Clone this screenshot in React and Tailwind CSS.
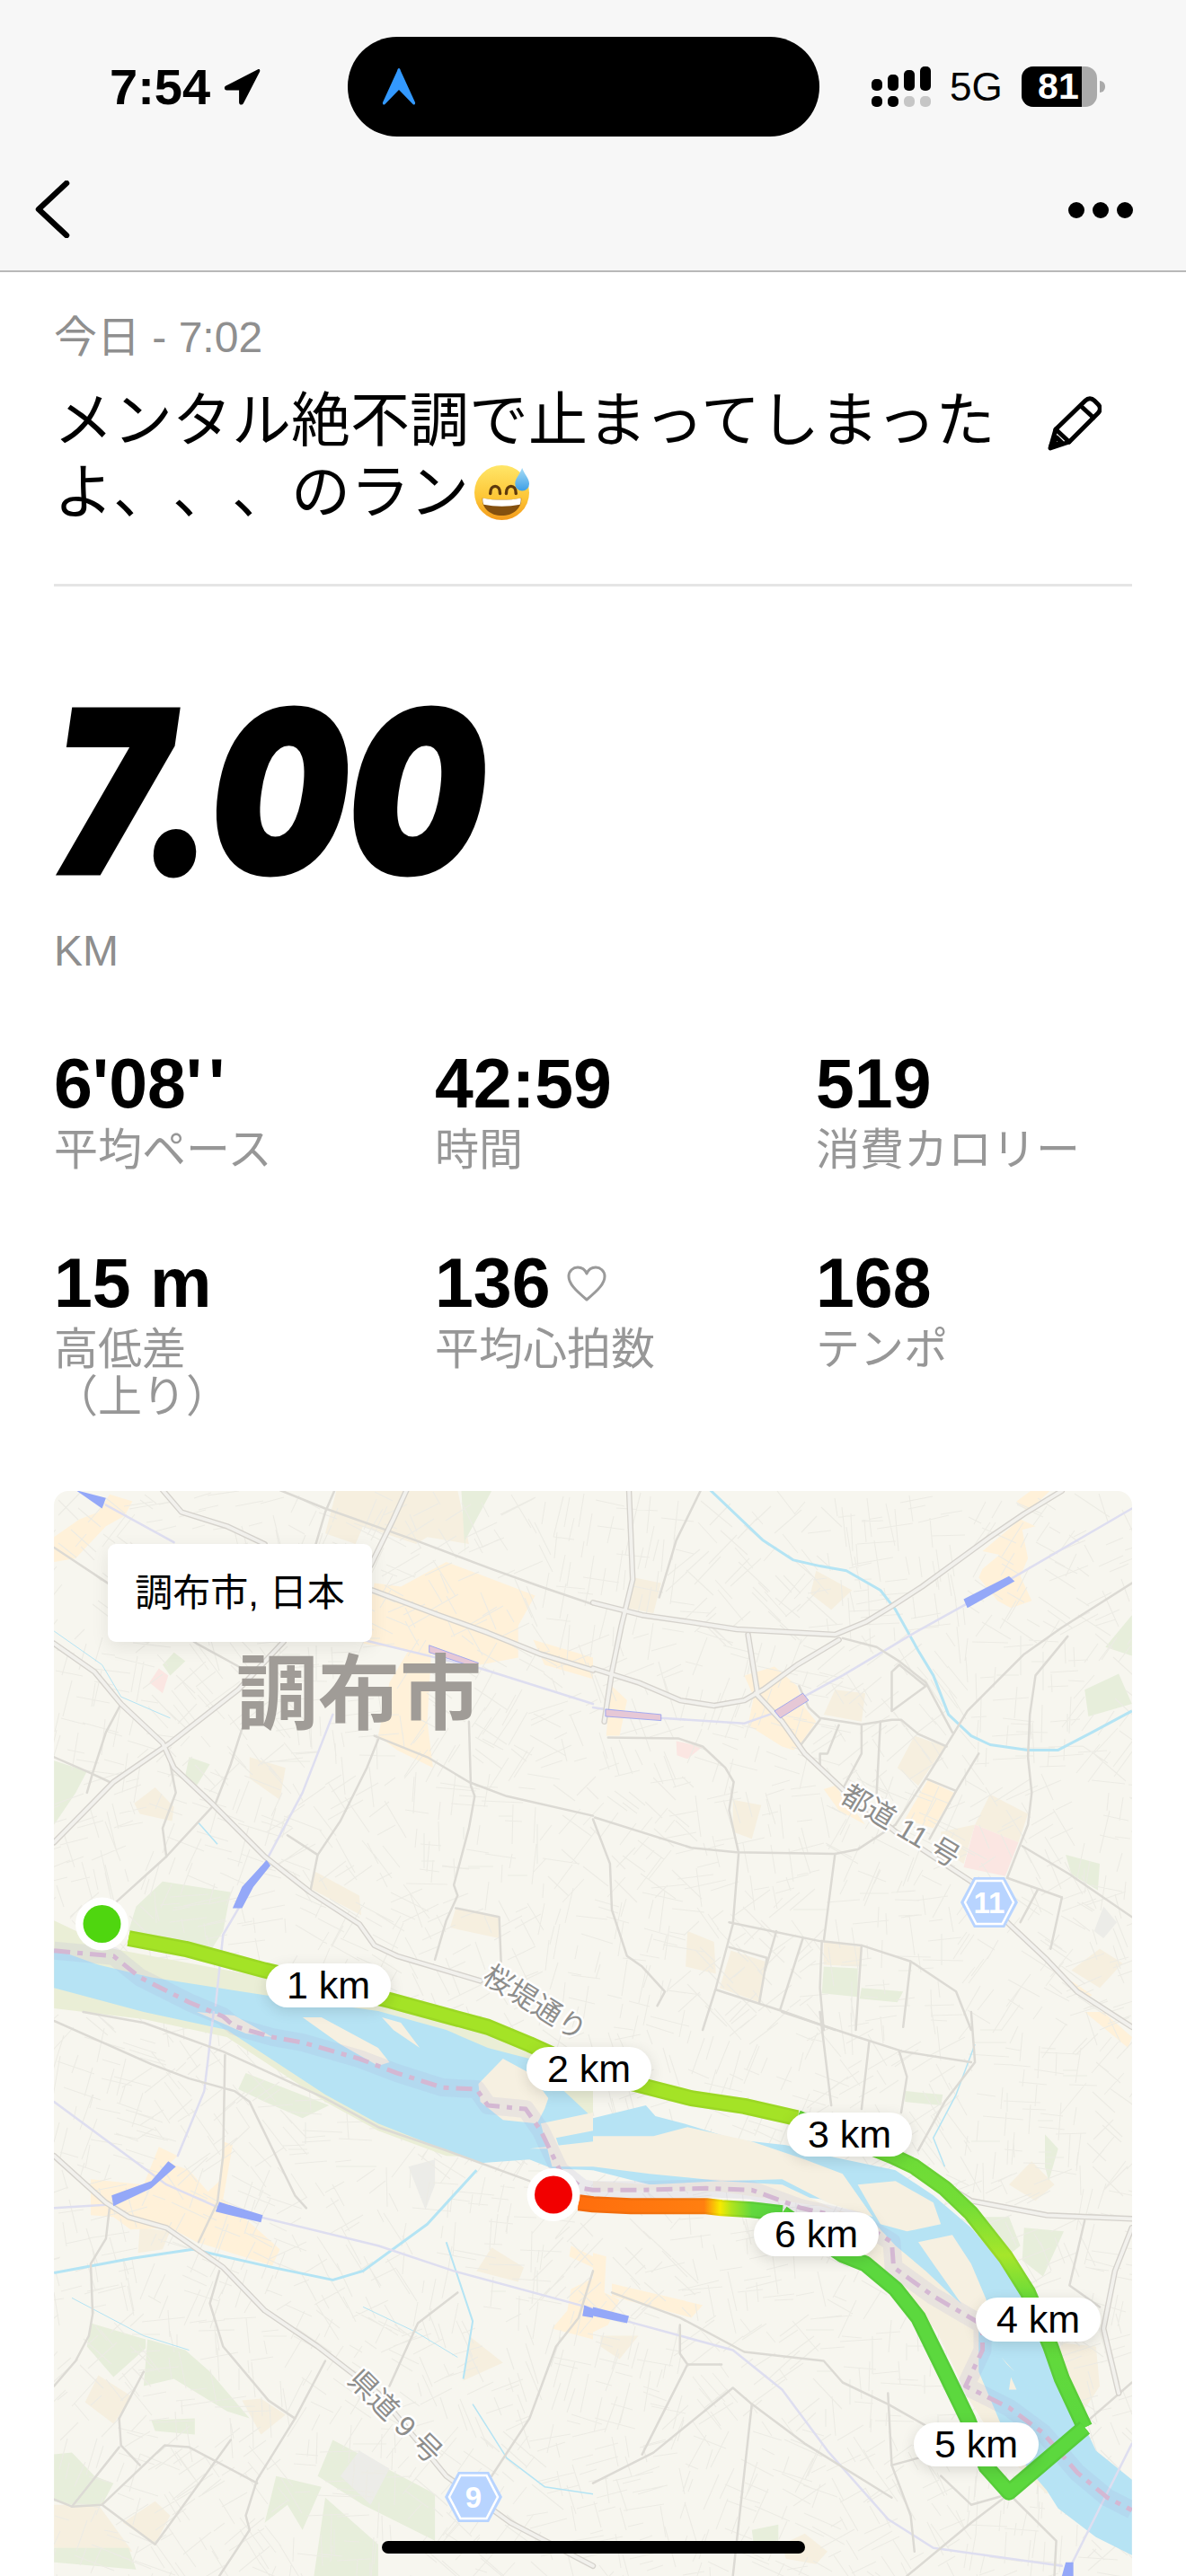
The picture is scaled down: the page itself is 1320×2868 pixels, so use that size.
import React from "react";

// zoom crops of the map, traced in their own coordinates
const Q = {
  a: [0, 1640, 660, 620],
  b: [660, 1640, 660, 620],
  c: [0, 2240, 660, 628],
  d: [660, 2240, 660, 628],
};
const P = (q, s) => {
  const [ox, oy, w, h] = Q[q];
  return s
    .trim()
    .split(/\s+/)
    .map((p) => {
      const [x, y] = p.split(",").map(Number);
      return `${(ox + (x * w) / 1568).toFixed(1)},${(oy + (y * h) / 1568).toFixed(1)}`;
    })
    .join(" ");
};

const tan = [
  ["a", "890,48 1210,48 1240,200 1130,180 1100,200 960,150 940,200 860,170"],
  ["a", "660,800 755,830 740,920 660,860"],
  ["a", "355,930 410,885 460,940 455,980 370,960"],
  ["a", "830,1120 950,1190 955,1245 820,1170"],
  ["a", "1205,1225 1320,1250 1320,1310 1190,1280"],
  ["b", "110,295 180,310 160,395 90,380"],
  ["b", "590,275 685,330 630,385 575,340"],
  ["b", "640,610 720,620 710,700 610,680"],
  ["b", "850,740 930,770 860,880 805,830"],
  ["b", "370,920 445,935 420,1030 370,1010"],
  ["b", "1050,905 1150,960 1125,1040 1010,990"],
  ["b", "920,1010 1010,990 980,1100 920,1060"],
  ["b", "250,1290 320,1320 325,1410 245,1390"],
  ["b", "365,1345 455,1375 440,1490 335,1450"],
  ["b", "610,1320 710,1335 705,1390 610,1385"],
  ["b", "1340,1340 1400,1380 1340,1450 1265,1400"],
  ["c", "640,1080 690,1075 755,1120 690,1175"],
  ["c", "260,1010 350,1070 300,1145 225,1085"],
  ["c", "1260,720 1300,655 1385,710 1370,750"],
  ["c", "1240,900 1330,975 1225,1025"],
  ["c", "143,1370 260,1370 350,1500 143,1490"],
  ["c", "410,1360 450,1400 410,1480 325,1420"],
  ["c", "370,600 450,610 430,660 365,670"],
  ["d", "20,900 120,900 70,965 20,930"],
  ["d", "1100,480 1160,415 1220,480 1170,525"],
  ["d", "1240,920 1330,930 1340,1040 1290,1120 1220,1000"],
  ["d", "500,1480 560,1450 620,1500 590,1535 510,1520"],
];

const yellow = [
  ["a", "143,180 210,130 260,110 290,60 350,80 330,120 280,150 200,240 143,250"],
  ["a", "960,480 990,310 1060,320 1180,250 1280,290 1415,345 1370,430 1370,520 1270,540 1140,510 1130,700 1145,830 1050,780 1000,740 1030,590 1080,500"],
  ["a", "1410,470 1568,520 1568,580 1440,540"],
  ["b", "400,570 480,545 540,600 560,660 590,700 550,760 530,780 500,770 410,710 425,630"],
  ["b", "1030,270 1075,230 1030,220 1130,130 1170,150 1135,160 1150,240 1130,290 1160,360 1105,380 1070,360 1020,295"],
  ["b", "1120,80 1160,48 1210,48 1150,110"],
  ["b", "825,975 885,865 955,900 900,1000"],
  ["b", "610,890 640,880 720,990 650,950"],
  ["b", "40,590 90,640 70,740 35,740 40,680"],
  ["b", "1265,1430 1320,1470 1300,1480"],
  ["c", "240,465 380,480 420,375 470,400 450,420 500,440 550,500 580,470 590,360 615,370 590,520 740,660 720,705 520,640 450,600 345,605 300,570 240,565"],
  ["c", "1510,650 1568,680 1568,710 1505,680"],
  ["c", "1510,770 1568,740 1568,910 1460,880 1500,830"],
  ["d", "50,755 290,815 260,850 50,790"],
  ["d", "0,670 35,680 30,780 70,800 40,870 0,890"],
  ["d", "1300,0 1350,0 1425,70 1415,100"],
];

const green = [
  ["a", "360,1220 430,1150 610,1180 590,1290 560,1340 480,1320 340,1290"],
  ["a", "143,810 230,840 200,900 143,990"],
  ["a", "430,540 460,505 490,530 450,570"],
  ["a", "500,800 555,820 520,880 490,850"],
  ["a", "1230,190 1300,50 1220,50 1230,230"],
  ["b", "1300,610 1390,565 1425,650 1310,685"],
  ["b", "1355,490 1425,400 1425,515"],
  ["b", "610,1390 700,1395 700,1475 605,1465"],
  ["b", "710,1450 820,1460 805,1490 705,1480"],
  ["b", "1250,1075 1340,1100 1335,1175 1265,1130"],
  ["c", "650,170 870,260 800,295 700,250 630,215"],
  ["c", "240,865 385,910 385,935 300,1015 230,930"],
  ["c", "390,910 490,940 555,1000 660,1130 600,1110 460,1020 380,1040"],
  ["c", "400,1135 515,1130 515,1175 410,1165"],
  ["c", "143,1230 190,1225 250,1290 190,1370 143,1360"],
  ["c", "250,1290 300,1310 270,1370 190,1370"],
  ["c", "700,1420 730,1290 850,1320 800,1440 760,1370"],
  ["c", "860,1350 1000,1480 1000,1568 830,1568"],
  ["c", "840,1290 880,1190 1150,1340 1150,1470 960,1370"],
  ["c", "143,1490 340,1490 360,1550 143,1530"],
  ["d", "825,220 925,230 920,260 825,250"],
  ["d", "1140,600 1245,610 1190,735 1135,690"],
  ["d", "1030,570 1100,570 1130,650 1095,680"],
  ["d", "1195,340 1230,380 1205,470 1195,430"],
  ["d", "420,1440 490,1425 490,1480 425,1480"],
];

const medium = [
  ["a", "740,48 860,100 1100,190 1300,270 1430,320 1568,370"],
  ["a", "885,48 860,110 835,200"],
  ["a", "143,210 285,310 520,480 640,550"],
  ["a", "143,800 240,845 300,875"],
  ["a", "320,650 280,730 245,845 230,900"],
  ["a", "1240,700 1245,880 1255,910 1240,1000 1200,1160 1210,1190 1180,1260 1150,1370"],
  ["a", "1000,750 970,830 900,980 840,1075 820,1180"],
  ["a", "760,1020 840,1075"],
  ["a", "990,740 1130,800 1240,870 1340,910 1568,965"],
  ["a", "640,720 610,820 570,930 440,1080 305,1210"],
  ["a", "440,1080 430,1000 465,900 450,820"],
  ["a", "1205,1225 1320,1250 1325,1380"],
  ["b", "285,48 220,190 175,350"],
  ["b", "5,970 260,1055 380,1068 640,1072 700,1060 800,990"],
  ["b", "40,745 225,747 290,770 350,830 372,870 360,950 385,1070 370,1270 325,1450 290,1568"],
  ["b", "0,975 45,1100 50,1230 90,1360 130,1390 190,1460 170,1500"],
  ["b", "360,1265 600,1318 710,1330 840,1375 960,1460 1000,1568"],
  ["b", "605,1318 600,1450 610,1568"],
  ["b", "640,1072 610,1318"],
  ["b", "1425,310 1240,435 1140,510 990,670 950,740 880,860 800,990"],
  ["b", "1255,460 1170,570 1155,680 1150,800 1160,900 1150,990 1095,1140"],
  ["b", "1020,790 960,895 890,1030"],
  ["b", "880,860 960,895"],
  ["b", "545,600 570,660 600,690 710,708 790,695 815,695 860,735 935,770"],
  ["b", "790,560 790,670 880,600 810,540 790,560"],
  ["b", "660,465 750,490 810,530 880,590 950,730"],
  ["b", "1135,1050 1260,1130 1425,1250"],
  ["b", "1095,1140 1240,1195"],
  ["b", "1175,1175 1130,1265"],
  ["b", "760,700 750,900"],
  ["b", "650,710 620,790 600,790 600,820"],
  ["b", "710,710 710,790 665,880"],
  ["b", "600,695 550,765"],
  ["b", "360,1335 460,1365 440,1490"],
  ["b", "485,1290 455,1400"],
  ["b", "555,1310 495,1510"],
  ["b", "325,1455 500,1515 640,1568"],
  ["b", "840,1375 820,1560"],
  ["b", "710,1330 695,1568"],
  ["b", "1240,1195 1210,1340"],
  ["c", "143,25 400,145 500,185 620,220 660,250 720,380 780,510 810,545"],
  ["c", "220,0 380,30 590,110 860,240 1000,320 1180,385 1400,470"],
  ["c", "595,120 590,400 575,530 525,640"],
  ["c", "290,540 280,630 240,700 245,840 235,900 200,970 143,1040"],
  ["c", "580,720 555,810 590,930 710,1080 780,1130 680,1300 650,1400 660,1440 580,1568"],
  ["c", "860,970 780,1130"],
  ["c", "1210,780 1105,865 1030,1040"],
  ["c", "1568,720 1530,850 1470,930 1400,1130 1300,1290"],
  ["c", "143,1355 190,1375 270,1370 435,1205 500,1210 680,1310"],
  ["c", "610,1190 410,1480 270,1370"],
  ["c", "315,1210 190,1375"],
  ["c", "315,1130 320,1205 370,1260"],
  ["c", "380,1000 315,1130"],
  ["d", "500,0 700,70 820,110 1000,140"],
  ["d", "600,0 630,260"],
  ["d", "730,85 710,270"],
  ["d", "810,110 830,180 815,280"],
  ["d", "1000,0 1010,140 930,250 860,385"],
  ["d", "1425,1030 1310,1135"],
  ["d", "1100,1340 1000,1420 830,1568"],
  ["d", "1100,1340 1225,1470 1220,1568"],
  ["d", "0,1310 160,1225 370,1045 420,1090 560,1200 790,1350"],
  ["d", "340,980 250,980 130,1230"],
  ["d", "230,870 230,950 250,980"],
  ["d", "50,780 230,850 400,945 610,970 660,1030 780,1090 880,1150"],
  ["d", "780,1060 790,1260 860,1240"],
  ["d", "790,1260 840,1400 850,1500"],
  ["d", "920,1290 1000,1370 1100,1340"],
  ["d", "1300,580 1260,760 1340,820"],
  ["d", "420,1090 370,1568"],
];

const thick = [
  ["a", "430,48 480,110 600,150 700,200"],
  ["a", "1075,48 1040,130 980,260"],
  ["a", "985,330 1160,400 1290,450 1430,510 1568,555"],
  ["a", "143,480 250,560 320,650 430,760 460,830 560,930 700,1080 820,1180 950,1270 990,1330 1050,1360 1270,1430"],
  ["a", "143,1040 300,870 450,760 630,610 750,475"],
  ["b", "0,365 130,400 260,420 380,440 640,455 720,420 790,375 870,320 960,250 1050,180 1140,115 1240,50"],
  ["b", "0,550 120,590 230,640 320,655 400,640 450,610 540,540 650,470"],
  ["b", "430,620 500,700 560,790 660,890 800,1010 1000,1150 1100,1270 1200,1370 1280,1460 1425,1560"],
  ["b", "95,48 105,300 75,430 50,560 30,700"],
  ["b", "410,455 435,620"],
  ["c", "143,400 280,530 340,570 440,600 590,710 700,830 840,930 1000,1060 1180,1290 1350,1420 1568,1540"],
  ["d", "930,480 1000,525 1200,565 1425,575"],
  ["d", "1425,600 1380,720 1350,880 1390,1060"],
];

const rails = [
  ["a", "280,90 460,195"],
  ["a", "960,470 1270,550 1568,650"],
  ["a", "880,680 800,900 700,1100 590,1300 570,1500"],
  ["b", "0,660 180,690 400,705 480,675 660,570 850,450 985,370 1110,295 1425,100"],
  ["c", "143,250 440,480 570,540 1000,650 1200,720 1568,825"],
  ["c", "143,545 300,535"],
  ["c", "565,0 540,220 470,400"],
  ["d", "90,860 370,940 500,1050 620,1220 780,1410 900,1490 1240,1540"],
  ["d", "1425,1200 1250,1568"],
];

const stations = [
  ["a", "200,48 280,70 270,100"],
  ["a", "705,1090 640,1165 615,1225 640,1225 670,1165 715,1105"],
  ["b", "980,355 1100,290 1115,305 990,380"],
  ["c", "295,510 400,470 445,415 465,430 400,490 300,540"],
  ["c", "580,528 695,565 690,585 570,555"],
  ["c", "1545,815 1568,825 1568,850 1540,845"],
  ["d", "0,820 95,845 90,865 0,845"],
  ["d", "1250,1530 1270,1530 1270,1568 1240,1568"],
];

const pinkStations = [
  ["a", "1135,485 1265,535 1250,545 1135,505"],
  ["b", "33,665 180,680 180,697 33,685"],
  ["b", "480,670 555,620 570,640 495,690"],
];

const canals = [
  ["a", "143,445 270,540 320,630 450,690", 1],
  ["a", "525,985 575,1045", 1.5],
  ["b", "310,48 450,190 530,245 600,262 670,275 760,330 800,385 860,500 900,570 940,680 1000,740 1050,765 1150,780 1230,780 1320,730 1425,670", 3],
  ["c", "143,725 350,685 510,660 720,710 880,745 960,720 1130,590 1260,440", 3],
  ["c", "960,820 1100,890 1210,960", 1],
  ["c", "1250,1090 1340,1240 1440,1320 1568,1340", 1.5],
  ["c", "190,795 380,900 500,940", 1],
  ["c", "1180,640 1250,860 1225,1020", 2],
  ["d", "1010,90 960,230 900,350 930,430", 1.5],
];

const river =
  P("a", "143,1340 260,1385 400,1420 700,1470 1000,1515") +
  " " +
  P("c", "1180,50 1290,100 1400,130") +
  " " +
  P("d", "0,295 140,260 165,290 240,310 380,355 510,370 620,400 800,440 900,510 1000,600 1090,710 1170,830 1235,1000 1290,1130 1330,1220 1425,1300 1425,1510 1330,1460 1230,1380 1200,1330 1150,1270 1080,1150 1020,1000 1020,850 950,790 880,720 800,650 720,560 600,520 350,490 150,480 0,440") +
  " " +
  P("c", "1460,435 1400,410 1270,420 1180,385 1000,310 860,230 600,50 380,0") +
  " " +
  P("a", "143,1450");

const bankNorth =
  P("a", "143,1260 300,1340 700,1420 1000,1490 1300,1560") +
  " " +
  P("c", "1400,80 1568,150") +
  " " +
  P("d", "0,295 0,440") +
  " " +
  P("c", "1400,410 1180,400 1000,330 860,250 600,70 380,20 143,-10");

const sand = [
  ["c", "800,15 850,15 1000,100 1030,140 1000,150 900,90"],
  ["c", "1010,15 1060,30 1110,100 1040,50"],
  ["c", "520,0 620,10 720,70 650,60"],
  ["c", "1265,200 1330,130 1400,170 1450,240 1440,270 1420,310 1330,300 1270,250"],
  ["c", "1430,310 1568,280 1568,330 1470,350 1480,380 1400,380 1568,360 1568,430 1460,430"],
  ["d", "0,345 160,345 250,320 420,360 560,410 660,450 700,510 740,570 620,530 500,465 340,470 150,450 0,430"],
  ["d", "700,480 800,470 900,530 920,590 830,610 760,590"],
  ["d", "860,640 950,620 1000,700 1040,800 1040,900 1000,850 960,790 900,700"],
  ["d", "0,470 150,480 340,470 500,480 660,560 720,570 600,540 340,500 150,495 0,500"],
  ["d", "1080,960 1115,1000 1095,980"],
  ["d", "1105,1015 1120,1050 1100,1050"],
];

const bankSouth = "720,570 880,690 1010,800 1040,1000 1100,1160 1230,1300 1200,1340 1080,1220 990,1070 960,1000 910,890 820,770 720,680";

const border =
  P("a", "143,1345 300,1360 370,1420 500,1490 590,1530") +
  " " +
  P("c", "620,40 720,70 800,85 950,130 1050,170 1170,210 1260,215 1290,260 1390,270 1430,330 1480,440 1540,490") +
  " " +
  P("d", "0,495 130,495 300,490 420,495 550,545 700,580 790,640 795,710 900,790 1030,870 1030,940 985,1040 1100,1100 1190,1170 1280,1280 1360,1350 1425,1385");

// thin street texture, the real network is far too dense to trace by hand
const streets = (() => {
  let seed = 48271;
  const r = () => (seed = (seed * 16807) % 2147483647) / 2147483647;
  let d = "";
  for (let y = 1660; y < 2868; y += 26) {
    for (let x = 60; x < 1260; x += 26) {
      const base = ((Math.floor(x / 150) * 37 + Math.floor(y / 150) * 61) % 90) * (Math.PI / 180);
      const n = 1 + Math.floor(r() * 2);
      for (let i = 0; i < n; i++) {
        const a = base + (r() > 0.5 ? Math.PI / 2 : 0) + (r() - 0.5) * 0.2;
        const l = 14 + r() * 34;
        const sx = x + r() * 26;
        const sy = y + r() * 26;
        d += `M${sx.toFixed(0)} ${sy.toFixed(0)}L${(sx + Math.cos(a) * l).toFixed(0)} ${(sy + Math.sin(a) * l).toFixed(0)}`;
      }
    }
  }
  return d;
})();

const Polys = ({ items, fill, ...rest }) => (
  <g fill={fill} {...rest}>
    {items.map(([q, s], i) => (
      <polygon key={i} points={P(q, s)} />
    ))}
  </g>
);

const Lines = ({ items, stroke, width, ...rest }) => (
  <g fill="none" stroke={stroke} strokeWidth={width} strokeLinejoin="round" strokeLinecap="round" {...rest}>
    {items.map(([q, s], i) => (
      <polyline key={i} points={P(q, s)} />
    ))}
  </g>
);

const Hex = ({ cx, cy, label }) => (
  <g transform={`translate(${cx} ${cy})`}>
    <polygon points="-32,0 -17,-28 17,-28 32,0 17,28 -17,28" fill="#b8d4ff" />
    <polygon points="-27,0 -14.5,-24 14.5,-24 27,0 14.5,24 -14.5,24" fill="none" stroke="#fff" strokeWidth="2.5" />
    <text y="12" textAnchor="middle" fontSize="33" fontWeight="700" fill="#fff" fontFamily="'Liberation Sans', sans-serif">
      {label}
    </text>
  </g>
);

const RoadLabel = ({ x, y, angle, size = 32, children }) => (
  <text
    transform={`translate(${x} ${y}) rotate(${angle})`}
    textAnchor="middle"
    dominantBaseline="middle"
    fontSize={size}
    fill="#8e8e8c"
    stroke="#fff"
    strokeWidth="5"
    paintOrder="stroke"
    strokeLinejoin="round"
    fontFamily="'Liberation Sans', 'Noto Sans CJK JP', sans-serif"
  >
    {children}
  </text>
);

const RouteLine = ({ points, stroke }) => (
  <g fill="none" strokeLinejoin="round">
    <polyline points={points} stroke={stroke} strokeWidth="18" />
    <polyline points={points} stroke="#000" strokeOpacity="0.05" strokeWidth="18" />
    <polyline points={points} stroke={stroke} strokeWidth="13" />
  </g>
);

const MapDrawing = () => (
  <svg viewBox="60 1660 1200 1208" className="block h-[1208px] w-[1200px]">
    <defs>
      <linearGradient id="backLeg" gradientUnits="userSpaceOnUse" x1="0" y1="2350" x2="0" y2="2700">
        <stop offset="0" stopColor="#66da38" />
        <stop offset="0.3" stopColor="#74dd36" />
        <stop offset="0.46" stopColor="#a6e62a" />
        <stop offset="0.6" stopColor="#66da3a" />
        <stop offset="1" stopColor="#5cd83e" />
      </linearGradient>
      <linearGradient id="lastLeg" gradientUnits="userSpaceOnUse" x1="870" y1="0" x2="616" y2="0">
        <stop offset="0" stopColor="#58d63e" />
        <stop offset="0.13" stopColor="#62d83e" />
        <stop offset="0.22" stopColor="#b0e41e" />
        <stop offset="0.27" stopColor="#f8ea00" />
        <stop offset="0.34" stopColor="#ff7f10" />
        <stop offset="1" stopColor="#ff6a0c" />
      </linearGradient>
    </defs>

    <rect x="60" y="1660" width="1200" height="1208" fill="#f7f6ef" />
    <Polys items={tan} fill="#f6efdf" />
    <Polys items={yellow} fill="#fff1d9" />
    <Polys items={green} fill="#e7eedb" />
    <polygon points={P("a", "395,590 420,550 445,570 430,620")} fill="#fbe6e2" />
    <polygon points={P("b", "220,755 290,770 250,805 222,795")} fill="#fbe6e2" />
    <polygon points={P("b", "1010,990 1125,1040 1090,1135 980,1110")} fill="#fbe6e2" />
    <polygon points={P("b", "1350,1220 1385,1265 1350,1310 1325,1290")} fill="#ecece8" />
    <polygon points={P("c", "900,1290 950,1220 1030,1270 980,1370")} fill="#ecece8" />
    <polygon points={P("c", "1080,430 1150,410 1150,480 1125,550")} fill="#ecece8" />

    <path d={streets} stroke="#ecebe4" strokeWidth="1.1" fill="none" />

    {canals.map(([q, s, w], i) => (
      <polyline key={i} points={P(q, s)} fill="none" stroke="#b4e4f4" strokeWidth={w} strokeLinejoin="round" />
    ))}

    <polygon points={bankNorth} fill="#eaeed6" />
    <polygon points={P("d", bankSouth)} fill="#f5efdf" />
    <polygon points={river} fill="#b6e3f4" />
    <Polys items={sand} fill="#f6f0e1" />

    <Lines items={rails} stroke="#dedef0" width="2.5" />
    <Lines items={medium} stroke="#dcdad4" width="2.5" />
    <Lines items={thick} stroke="#d5d2cc" width="6.5" />
    <Lines items={thick} stroke="#f2f1ed" width="3.8" />
    <Polys items={stations} fill="#94a8f8" />
    <Polys items={pinkStations} fill="#e6c8d6" stroke="#8f9cf2" strokeWidth="0.8" />

    <polyline points={border} fill="none" stroke="#a9a6d8" strokeOpacity="0.16" strokeWidth="20" strokeLinejoin="round" />
    <polyline points={border} fill="none" stroke="#d4b8d3" strokeWidth="5" strokeDasharray="18 8 6 8" strokeLinejoin="round" />

    <RouteLine
      points={P("a", "340,1310 490,1340 700,1400 1032,1485 1290,1560") + " " + P("c", "1400,90 1568,170") + " " + P("d", "130,205 260,240 400,262 540,295")}
      stroke="#a4e326"
    />
    <RouteLine points={P("d", "540,295 790,400 850,430 930,490 1000,560 1090,680 1150,780 1210,930 1240,1020 1300,1155")} stroke="url(#backLeg)" />
    <RouteLine points={P("d", "1300,1155 1100,1335 1040,1265 990,1130 930,1000 860,850 800,770 720,700 660,675 500,560")} stroke="#5cd83e" />
    <RouteLine points={P("d", "500,560 420,550 340,545 300,540 100,540 0,535") + " " + P("c", "1530,530")} stroke="url(#lastLeg)" />

    <RoadLabel x={594} y={2232} angle={32}>桜堤通り</RoadLabel>
    <RoadLabel x={1001} y={2035} angle={31}>都道 11 号</RoadLabel>
    <RoadLabel x={438} y={2692} angle={45}>県道 9 号</RoadLabel>
    <Hex cx={1101} cy={2118} label="11" />
    <Hex cx={527} cy={2780} label="9" />

    <circle cx="113.5" cy="2142" r="29.5" fill="#fff" />
    <circle cx="113.5" cy="2142" r="21" fill="#4fd60f" />
    <circle cx="616" cy="2443.5" r="29.5" fill="#fff" />
    <circle cx="616" cy="2443.5" r="21" fill="#f20000" />
  </svg>
);

const KmPill = ({ className, children }) => (
  <div className={`absolute flex h-[49px] w-[139px] items-center justify-center rounded-full bg-white text-[43px] text-black shadow-[0_4px_16px_rgba(0,0,0,0.12)] ${className}`}>
    {children}
  </div>
);

const SignalBars = () => {
  const bars = [
    { top: 13, low: "bg-black" },
    { top: 18, low: "bg-black" },
    { top: 23, low: "bg-[#c6c6c6]" },
    { top: 27, low: "bg-[#c6c6c6]" },
  ];
  return (
    <div className="flex h-[45px] items-end gap-[6px]">
      {bars.map((b, i) => (
        <div key={i} className="flex w-[12px] flex-col gap-[6px]">
          <div className="rounded-[5px] bg-black" style={{ height: b.top }} />
          <div className={`h-[12px] rounded-[5px] ${b.low}`} />
        </div>
      ))}
    </div>
  );
};

const Emoji = () => (
  <svg viewBox="0 0 64 64" className="ml-[5px] h-[63px] w-[63px]">
    <defs>
      <linearGradient id="face" x1="0" y1="0" x2="0" y2="1">
        <stop offset="0" stopColor="#ffe668" />
        <stop offset="0.6" stopColor="#fdc535" />
        <stop offset="1" stopColor="#f39a1c" />
      </linearGradient>
      <linearGradient id="drop" x1="0" y1="0" x2="0" y2="1">
        <stop offset="0" stopColor="#a6dcf6" />
        <stop offset="1" stopColor="#3d9fe6" />
      </linearGradient>
    </defs>
    <circle cx="32" cy="32" r="31" fill="url(#face)" />
    <path d="M19 33c0-11 11-11 11 0M37 33c0-11 11-11 11 0" fill="none" stroke="#5e3a0d" strokeWidth="3.500" strokeLinecap="round" />
    <path d="M10 38c14 3 30 3 44 0 1 11-9 20-22 20S9 49 10 38z" fill="#84500f" />
    <path d="M10.500 38c14 3 29 3 43 0 .3 2.500 0 5-1 7.500-13 2.500-28 2.500-41 0-1-2.500-1.300-5-1-7.500z" fill="#fff" />
    <path d="M55 4c3 8 8 12 8 18a8 8 0 0 1-16 0c0-6 5-10 8-18z" fill="url(#drop)" />
  </svg>
);

const Stat = ({ value, label, extra }) => (
  <div>
    <div className="flex h-[72px] items-center gap-[18px] text-[77px] font-bold text-black">
      {value}
      {extra}
    </div>
    <div className="mt-[11px] text-[49px] leading-[53px] text-[#979797]">{label}</div>
  </div>
);

export default function App() {
  return (
    <div className="flex h-[2868px] w-[1320px] flex-col overflow-hidden bg-white font-['Liberation_Sans','Noto_Sans_CJK_JP',sans-serif] text-black">
      {/* status bar and nav */}
      <div className="border-b-2 border-[#b8b8b8] bg-[#f7f7f7]">
        <div className="flex h-[178px] pt-[41px]">
          <div className="flex h-[111px] w-[387px] items-center gap-[14px] pl-[122px]">
            <span className="text-[56px] leading-none font-bold">7:54</span>
            <svg viewBox="0 0 42 42" className="h-[41px] w-[42px]">
              <path d="M40 1 3 20c-2.500 1.300-2 5 1 5h14v14c0 3 3.500 3.500 5 1L41.500 4C42.300 2 41.500.5 40 1z" fill="#000" />
            </svg>
          </div>
          <div className="flex h-[111px] w-[525px] items-center rounded-[55px] bg-black pl-[38px]">
            <svg viewBox="0 0 38 41" className="h-[41px] w-[38px]">
              <path d="M19 0c1 0 1.500 1 2 3l16 35c.5 2-1 3.500-2.500 2L19 24 3.500 40C2 41.500.5 40 1 38L17 3c.5-2 1-3 2-3z" fill="#3399ff" />
            </svg>
          </div>
          <div className="flex h-[111px] flex-1 items-center pl-[58px]">
            <SignalBars />
            <span className="ml-[21px] text-[44px] leading-none">5G</span>
            <div className="ml-[21px] flex h-[45px] w-[84px] overflow-hidden rounded-[13px] bg-[#aaaaaa]">
              <div className="flex w-[67px] items-center justify-end bg-black pr-[3px] text-[41px] font-bold text-white">81</div>
            </div>
            <div className="ml-[3px] h-[13px] w-[6px] rounded-r-full bg-[#aaaaaa]" />
          </div>
        </div>
        <div className="flex h-[123px] items-start justify-between pt-[23px] pr-[59px] pl-[38px]">
          <svg viewBox="0 0 40 64" className="h-[64px] w-[40px]">
            <path d="M36 3 5 32l31 29" fill="none" stroke="#000" strokeWidth="6.500" strokeLinecap="round" strokeLinejoin="round" />
          </svg>
          <div className="mt-[24px] flex gap-[9px]">
            <div className="h-[18px] w-[18px] rounded-full bg-black" />
            <div className="h-[18px] w-[18px] rounded-full bg-black" />
            <div className="h-[18px] w-[18px] rounded-full bg-black" />
          </div>
        </div>
      </div>

      {/* activity */}
      <div className="flex flex-1 flex-col px-[60px]">
        <div className="pt-[50px] text-[48px] leading-[46px] text-[#8f8f8f]">今日 - 7:02</div>
        <div className="mt-[29px] flex justify-between border-b-[3px] border-[#e5e5e5] pb-[62px]">
          <div className="text-[66px] leading-[80px] [text-spacing-trim:space-all]">
            メンタル絶不調で止まってしまった
            <div className="flex items-center">
              よ、、、のラン
              <Emoji />
            </div>
          </div>
          <svg viewBox="0 0 60 62" className="mt-[12px] mr-[34px] h-[62px] w-[60px]">
            <g fill="none" stroke="#000" strokeWidth="5" strokeLinejoin="round" strokeLinecap="round">
              <path d="M9 38 42 6c3-3 7-3 10 0l4 4c3 3 3 7 0 10L24 52 3 59z" />
              <path d="M37 12l14 13M9 38l15 14M4 56l6-9 6 6z" />
            </g>
          </svg>
        </div>

        <div className="mt-[118px] h-[220px] font-['Inter',sans-serif] text-[250px] leading-[220px] font-black italic">
          <span className="inline-block origin-left scale-x-[0.86] [-webkit-text-stroke:5px_#000]">7.00</span>
        </div>
        <div className="mt-[45px] text-[48px] leading-[46px] text-[#8e8e8e]">KM</div>

        <div className="mt-[89px] grid grid-cols-[424px_424px_352px] gap-y-[86px]">
          <Stat value={<span>6'08'<span className="ml-[7px]">'</span></span>} label="平均ペース" />
          <Stat value="42:59" label="時間" />
          <Stat value="519" label="消費カロリー" />
          <Stat value="15 m" label={<>高低差<br />（上り）</>} />
          <Stat
            value="136"
            label="平均心拍数"
            extra={
              <svg viewBox="0 0 46 42" className="h-[42px] w-[46px]">
                <path d="M23 39C10 28 3 21 3 13 3 7 8 3 13 3c4 0 8 2 10 7 2-5 6-7 10-7 5 0 10 4 10 10 0 8-7 15-20 26z" fill="none" stroke="#9a9a9a" strokeWidth="3" strokeLinejoin="round" />
              </svg>
            }
          />
          <Stat value="168" label="テンポ" />
        </div>

        {/* map */}
        <div className="relative mt-[78px] flex-1 overflow-hidden rounded-t-[16px]">
          <MapDrawing />
          <div className="absolute top-[59px] left-[60px] flex h-[109px] w-[294px] items-center justify-center rounded-[9px] bg-white text-[42px] shadow-[0_6px_20px_rgba(0,0,0,0.08)]">
            調布市, 日本
          </div>
          <div className="absolute top-[173px] left-[203px] text-[91px] leading-[108px] font-bold text-[#a09c97]">調布市</div>
          <KmPill className="top-[526px] left-[236px]">1 km</KmPill>
          <KmPill className="top-[619px] left-[526px]">2 km</KmPill>
          <KmPill className="top-[692px] left-[816px]">3 km</KmPill>
          <KmPill className="top-[803px] left-[779px]">6 km</KmPill>
          <KmPill className="top-[898px] left-[1026px]">4 km</KmPill>
          <KmPill className="top-[1037px] left-[957px]">5 km</KmPill>
        </div>
      </div>

      {/* home indicator */}
      <div className="absolute top-[2829px] left-[425px] h-[14px] w-[471px] rounded-full bg-black" />
    </div>
  );
}
